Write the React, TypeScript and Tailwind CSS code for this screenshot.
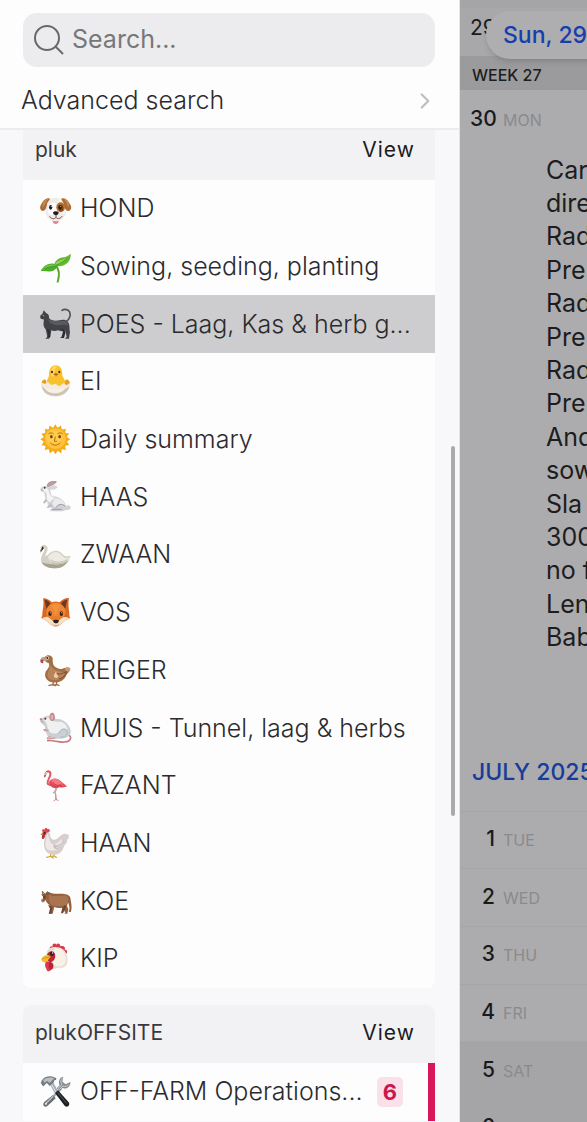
import type { ReactNode } from "react";
import { ChevronRight } from "lucide-react";

function Glyph({ children }: { children: ReactNode }) {
  return (
    <svg viewBox="0 0 96 96" className="w-8 h-8 shrink-0 overflow-visible" aria-hidden="true">
      {children}
    </svg>
  );
}

const Dog = () => (
  <Glyph>
    <path d="M37 78h19v7c0 5-4 8-9 8s-9-3-9-8z" fill="#ea7f93" />
    <path d="M48 14c19 0 29 12 31 30 2 20-9 40-31 41-22 0-34-18-31-40 2-19 12-31 31-31z" fill="#eeebe9" />
    <path d="M25 40c5-10 15-14 23-7 5 8 4 21-2 28-9 8-20 4-23-5z" fill="#fff" />
    <path d="M54 16c14-2 24 10 26 26 1 13-6 20-15 18-9-1-16-9-15-19 0-8 8-14 4-25z" fill="#f8f4f1" />
    <path d="M30 17C17 11 8 25 2 37c-4 8 0 18 8 17 11-3 9-19 13-26 3-6 7-8 7-11zM64 17c13-6 22 8 28 20 4 8 0 18-8 17-11-3-10-18-14-25-3-6-6-8-6-12z" fill="#aa6c36" />
    <path d="M8 31c5-9 10-14 17-13-8 5-12 21-17 28M87 31c-5-9-9-13-16-13 8 6 11 20 15 27" fill="#c98c50" />
    <ellipse cx="62" cy="43" rx="13" ry="15" fill="#b66d27" />
    <ellipse cx="63" cy="45" rx="7" ry="10" fill="#7d431a" />
    <ellipse cx="32" cy="43" rx="5" ry="7" fill="#262025" />
    <ellipse cx="60" cy="43" rx="5" ry="7" fill="#261b19" />
    <circle cx="34" cy="40" r="1.5" fill="#fff" />
    <circle cx="62" cy="40" r="1.5" fill="#fff" />
    <path d="M39 58c4-4 13-4 17 0 0 5-4 9-8 9s-9-4-9-9z" fill="#28181c" />
    <path d="M48 65v8c-6 8-17 3-19-3m19 3c6 8 16 2 18-4" fill="none" stroke="#765048" strokeWidth="3" />
  </Glyph>
);

const Sprout = () => (
  <Glyph>
    <path d="M53 92C59 72 59 56 48 45" fill="none" stroke="#5da72d" strokeWidth="6" strokeLinecap="round" />
    <path d="M42 44c3-18 18-24 29-25 7-1 15-5 21-11 2 23-15 44-50 36z" fill="#63b82f" />
    <path d="M54 44C38 31 11 39 2 61c17-4 36 11 52-17z" fill="#4dac28" />
    <path d="M45 43c17-4 30-16 43-29-13 11-24 12-34 17-5 3-8 7-9 12z" fill="#90d44c" />
    <path d="M5 58c15-7 30-13 45-14-16-8-35-3-45 14z" fill="#79c443" />
    <path d="M47 43c15-5 26-13 36-22M12 54c12-6 23-8 37-9" fill="none" stroke="#348f25" strokeWidth="2" />
  </Glyph>
);

const Cat = () => (
  <Glyph>
    <path d="M79 41c9-6 14-19 10-29C84 2 71 3 66 7" fill="none" stroke="#515258" strokeWidth="5" strokeLinecap="round" />
    <path d="M11 7l8 9c7 2 9 8 8 14 5 8 18 9 31 7 9-2 19-3 25 4 8 8 4 20 7 31l-3 20h-12l5-6-4-18c-8 4-15 1-22-1-8 3-15 2-20 0l-3 19-4 6H16l6-6-5-22C6 52 13 42 11 34 1 35-1 27 2 22l5-4z" fill="#424349" />
    <path d="M64 60l5 11-4 15-5 4h12l5-19M23 61l6 9 1 17h-9l5-5-4-15" fill="#2a2b30" />
    <path d="M25 34c14 9 34 4 50 5 8 1 10 10 8 14-14-8-31 3-45-4-8-4-13-9-13-15z" fill="#595a60" />
    <path d="M5 25l5-2M2 30l8-2" stroke="#292a2e" strokeWidth="2" />
    <circle cx="10" cy="23" r="2" fill="#d7b752" />
  </Glyph>
);

const HatchingChick = () => (
  <Glyph>
    <path d="M18 43c-4-7-12 0-14 8-3 9 7 11 17 8M76 43c5-7 13 1 14 9 2 8-8 10-16 7" fill="#e99c1d" />
    <path d="M27 28C26 8 35-2 47-2s21 10 20 30c0 7 10 11 8 24-3 13-13 20-28 20-17 0-28-9-27-23 0-9 7-14 7-21z" fill="#f8c22f" />
    <path d="M33 24C32 5 42-2 51 2c-9 5-9 18-5 28-8 4-13 0-13-6z" fill="#ffe16b" opacity=".8" />
    <path d="M3 49l12 5 8-7 11 10 12-4 12 8 13-10 9 7 10-8c2 23-17 42-43 42S1 75 3 49z" fill="#f3ecdc" />
    <path d="M5 60c5 22 20 30 41 30 23 0 38-12 43-31-16 17-62 25-84 1z" fill="#cfc4b4" />
    <path d="M12 61c10 10 27 10 37 8 9 4 20-3 31-11-5 18-20 24-34 24-18 0-30-7-34-21z" fill="#f6f0e7" />
    <ellipse cx="36" cy="18" rx="3" ry="4" fill="#37281b" />
    <ellipse cx="58" cy="18" rx="3" ry="4" fill="#37281b" />
    <path d="M40 25l7-5 8 5-7 7z" fill="#e67b20" />
    <path d="M41 25h13" stroke="#a84b17" strokeWidth="2" />
  </Glyph>
);

const RAYS = [0, 22, 45, 67, 90, 112, 135, 157, 180, 202, 225, 247, 270, 292, 315, 337];

const Sun = () => (
  <Glyph>
    {RAYS.map((angle) => (
      <path key={angle} d="M38 14l8-13 8 13z" fill="#efa719" transform={`rotate(${angle} 46 46)`} />
    ))}
    <circle cx="46" cy="46" r="36" fill="#f5ac1e" />
    <circle cx="46" cy="44" r="31" fill="#ffc33b" />
    <ellipse cx="42" cy="39" rx="24" ry="19" fill="#ffd052" opacity=".7" />
    <ellipse cx="34" cy="38" rx="4" ry="5" fill="#6e421d" />
    <ellipse cx="59" cy="38" rx="4" ry="5" fill="#6e421d" />
    <path d="M26 29c6-4 10-3 14 0M53 29c5-4 10-3 14 0M46 39l-3 13h7M32 57c8 9 20 9 28 0" fill="none" stroke="#b87119" strokeWidth="3" strokeLinecap="round" />
  </Glyph>
);

const Rabbit = () => (
  <Glyph>
    <path d="M20 15C21 3 36-3 50 1c1 5-12 13-26 18z" fill="#a19b9e" />
    <path d="M23 14c3-8 14-12 24-11-3 5-13 8-22 12z" fill="#d7959d" />
    <path d="M25 20c7-9 21-10 27-3 1 7-11 10-24 9z" fill="#d8d6da" />
    <path d="M4 20c6-8 20-6 25 5 5 10 2 18 10 21 22 1 36 15 39 29 7-4 14-2 14 5 0 6-8 8-15 7-6 5-17 4-45 4l-3-5 10-4c-11-2-17-7-18-22-7-8-7-16-8-26-9 1-14-5-9-14z" fill="#d2d1d7" />
    <path d="M10 19c11-3 17 8 18 17 3 10 10 14 19 15-12 4-20 12-18 23-10-4-7-25-10-38-4-4-12-7-9-17z" fill="#f4f3f5" />
    <path d="M47 52c17 0 27 11 28 22-12-12-24-1-30 5-11-6-9-19 2-27z" fill="#eceaee" />
    <path d="M17 53l-8 11 3 4 11-8 4 12-7 7 4 3 14-8" fill="#c0bfc5" />
    <path d="M48 80c6-10 18-14 27-4M36 85h29" fill="none" stroke="#9a98a0" strokeWidth="3" />
    <circle cx="14" cy="20" r="3" fill="#37343a" />
    <path d="M2 25l5 3" stroke="#d28e91" strokeWidth="3" />
  </Glyph>
);

const Swan = () => (
  <Glyph>
    <path d="M6 26c6-8 14-2 12 7C16 43 4 54 8 66" fill="none" stroke="#d3d0c3" strokeWidth="9" strokeLinecap="round" />
    <path d="M4 62c2-8 12-11 20-15 11-11 30-18 43-2 7 8 14 8 26 5-8 15-18 37-46 38C24 88 4 80 4 62z" fill="#d3d0c3" />
    <path d="M24 54c9-15 28-21 40-7 8 10 14 12 25 8-7 10-18 17-35 17-16 0-28-6-30-18z" fill="#eceae1" />
    <path d="M4 68c7 15 25 20 43 20 20 0 31-10 39-24-15 14-34 14-47 12-14-2-26-2-35-8z" fill="#a7a38e" />
    <path d="M31 62c11 9 32 11 49 0M36 70c15 6 27 5 39 0" fill="none" stroke="#c4c0b1" strokeWidth="3" />
    <path d="M7 24l-6 10 1 7 7-10z" fill="#81583a" />
    <path d="M6 22l6 5-6 7z" fill="#292827" />
  </Glyph>
);

const Fox = () => (
  <Glyph>
    <path d="M9 4c9-1 20 5 27 12 7-3 15-3 22 0C65 8 77 2 87 3c-3 14-1 29 0 38 2 9-1 15 4 22-12 4-21 12-30 20-9 7-19 7-28 0C24 75 15 67 3 63c6-6 3-14 5-22C10 30 12 16 9 4z" fill="#d96820" />
    <path d="M13 8c8 0 16 6 19 13-4 4-9 8-12 15-3-8-4-18-7-28zM82 8c-8 0-16 5-19 13 4 4 9 8 12 15 3-8 4-18 7-28z" fill="#6e3924" />
    <path d="M20 38C25 24 34 17 47 17s23 7 29 21c3 13-7 26-17 32H34C24 61 16 52 20 38z" fill="#ee8735" />
    <path d="M34 26c6-6 20-6 27 0-8 8-11 18-14 30-3-12-6-22-13-30z" fill="#f29340" />
    <path d="M5 63c10-2 16-5 22-3 8 2 14 12 20 13 6-1 13-12 21-13 7-1 13 1 22 3-13 4-20 15-29 20-9 6-19 6-27 0-10-6-16-15-29-20z" fill="#f2dfc4" />
    <path d="M22 60c8 2 18 16 25 16s17-14 25-16c-4-8-15-2-25-2s-20-6-25 2z" fill="#e87d2c" />
    <ellipse cx="30" cy="50" rx="5" ry="7" fill="#402116" />
    <ellipse cx="64" cy="50" rx="5" ry="7" fill="#402116" />
    <circle cx="31" cy="47" r="1.5" fill="#fff" />
    <circle cx="65" cy="47" r="1.5" fill="#fff" />
    <path d="M39 71c4-4 14-4 18 0-1 5-5 8-9 8s-8-3-9-8z" fill="#281d21" />
    <path d="M40 83c5 4 12 4 17 0" fill="none" stroke="#a78472" strokeWidth="2" />
  </Glyph>
);

const Dodo = () => (
  <Glyph>
    <path d="M40 76l-1 13-12 2m12-2l7 3M51 75l-2 14-9 1m9-1l8 2" fill="none" stroke="#9b6742" strokeWidth="4" strokeLinecap="round" />
    <path d="M38 10C35-1 21-2 14 6c-4 8 3 16 12 18 5 9-2 17-9 26-6 17 4 29 21 32 19 3 37-7 41-22l8-10 4-7-11-5c-13 0-16 8-27 2-13-6-15-10-15-30z" fill="#a26e46" />
    <path d="M28 31c8 2 13 18 29 16 9 5 14 4 18 3-3 15-14 25-31 26-16 0-23-8-21-19 1-9 8-12 5-26z" fill="#b8845a" />
    <path d="M44 53c13 8 22 3 35-3-3 14-12 20-22 21" fill="none" stroke="#795035" strokeWidth="3" />
    <path d="M75 45c-1-8 6-12 14-7 6 6-1 10-5 12" fill="#c69c77" />
    <path d="M16 7C8 3-1 11 2 18c1 4 4 8 8 6-2-7 5-7 11-6z" fill="#bd9d82" />
    <path d="M2 14c-3 6 2 12 8 10-3-3-2-7 2-10z" fill="#b6434a" />
    <circle cx="22" cy="9" r="5" fill="#f1e4c8" />
    <circle cx="22" cy="9" r="3" fill="#29221d" />
    <path d="M42 61c2-6 4-9 6-13l3 12c6 2 4 8-2 9-5 0-9-2-7-8z" fill="#f0cdad" />
  </Glyph>
);

const Mouse = () => (
  <Glyph>
    <path d="M77 67c21 1 20 21-4 23-19 2-34-7-50-4" fill="none" stroke="#c57981" strokeWidth="5" strokeLinecap="round" />
    <path d="M2 22c8-6 17-12 27-10 15 0 15 12 28 9 16 2 31 17 35 34 3 14-9 24-26 25H25l2-5c-10-6-10-20-12-29-2-8-12-9-14-18z" fill="#cbd0d2" />
    <path d="M11 23c6-8 16-7 25 1 8 8 16 3 29 6 12 4 18 17 18 24-8-10-21-5-27 7-8 6-21 4-27-2-9-11-4-23-18-36z" fill="#eff1f1" />
    <path d="M29 13c-1-11 12-15 14-5 4 9 1 20-8 19-7-2-7-9-6-14z" fill="#c6858b" />
    <path d="M32 13c1-6 7-7 8 0s-1 11-5 10-4-5-3-10z" fill="#e5adb0" />
    <path d="M57 64c5-13 18-17 25-4 1 12-8 15-21 15" fill="none" stroke="#aebbc0" strokeWidth="3" />
    <circle cx="16" cy="20" r="3" fill="#592e35" />
    <ellipse cx="3" cy="22" rx="4" ry="3" fill="#cb7a85" />
    <path d="M20 52l-9 1 3 4 12-2M32 73l-10 4 1 4 23-3M2 26l8 5" fill="none" stroke="#cb8e90" strokeWidth="3" />
  </Glyph>
);

const Flamingo = () => (
  <Glyph>
    <path d="M49 50l-5 15-5 3 8 2-1 20-5 3M46 67l4 23 6 1M53 50l-8 18" fill="none" stroke="#c896a0" strokeWidth="3" strokeLinejoin="round" />
    <path d="M17 10c5-10 16-6 14 4-1 9-10 17-8 26 3 9 18 2 28 3" fill="none" stroke="#df5664" strokeWidth="6" strokeLinecap="round" />
    <path d="M27 36c6-13 23-14 34-4 6 6 13 9 20 18-10-1-10 5-22 2-16 6-31 0-32-16z" fill="#e6505e" />
    <path d="M34 30c12-8 22-3 28 5l8 9-10-3-8 5c-8-5-15-7-18-16z" fill="#f57980" />
    <path d="M39 38c8 8 17 10 27 10M31 42c8 8 17 10 25 8" fill="none" stroke="#bd3847" strokeWidth="2" />
    <path d="M18 7c-6 1-4 8-5 14l5-6 4-3z" fill="#eba6a8" />
    <path d="M14 14l-1 9 5-6" fill="#37282b" />
    <circle cx="20" cy="8" r="2" fill="#fff3d2" />
  </Glyph>
);

const Rooster = () => (
  <Glyph>
    <path d="M32 74v11l-12 3m12-3l8 5M43 74l-1 10-7 2m7-2l7 4" fill="none" stroke="#d9a83f" strokeWidth="4" strokeLinecap="round" />
    <path d="M10 12c6-6 18-4 20 7 1 12 7 20 17 15 10-2 13-13 23-16 7-3 13 1 18 3-5 4 3 9-7 14 3 10-6 14-9 19-3 16-16 27-31 26-18 0-29-14-29-29 0-16 5-24-2-39z" fill="#d6cfce" />
    <path d="M21 16c9 15 5 31 21 33 11-2 14-8 24-16-1 21-9 34-29 35-18 0-24-12-20-26 2-9 4-15 4-26z" fill="#eee9e6" />
    <path d="M41 47c8 9 20 0 32-10-2 16-12 24-23 27-8-2-12-8-9-17z" fill="#c6bfc4" />
    <path d="M47 50c8 3 16-4 23-9M49 58c9 0 16-5 21-11" fill="none" stroke="#e9e4e4" strokeWidth="3" />
    <path d="M8 11C3 7 9 1 14 5c0-7 8-6 8-1 7-3 9 4 6 8l-9 2c1 4-1 7-6 7-6-1-5-6-5-10z" fill="#d94451" />
    <path d="M9 16c-2 7-6 11-2 17 6 1 9-7 8-15z" fill="#b92d3a" />
    <path d="M9 13l-8 7 8 2z" fill="#b9833b" />
    <circle cx="14" cy="15" r="3" fill="#342325" />
  </Glyph>
);

const Ox = () => (
  <Glyph>
    <path d="M14 26L4 27l3 6 9 4 3 14 9 9 5 15-4 11h9l5-20c8 4 17 4 25 2l8 15-3 3h9l3-13-4-10 3-11c6 14 5 22 2 29h6c6-13 1-28-1-43-4-11-15-11-28-12-15 0-26 1-36-5l-5 1z" fill="#94603e" />
    <path d="M27 29c18 8 39 0 53 3 8 7 5 22-2 28-13 5-32 4-43 0-8-7-10-19-8-31z" fill="#a97550" />
    <path d="M24 59l6 12-4 15h8l3-19M75 60l-8 8-4 17h6l9-19" fill="#714530" />
    <path d="M14 27C10 22 9 18 7 20c0 7 3 10 8 12m10-5c-2-4 0-9-4-6-2 3-1 6 0 8" fill="none" stroke="#6b5341" strokeWidth="3" strokeLinecap="round" />
    <path d="M4 42c-2 7 2 12 8 10l9-10-7-4z" fill="#bd8d6b" />
    <path d="M17 31l-8 3 1 14 9-5z" fill="#85512f" />
    <circle cx="12" cy="36" r="2" fill="#2e211c" />
    <path d="M5 47l6 1" stroke="#613c30" strokeWidth="2" />
  </Glyph>
);

const ChickenHead = () => (
  <Glyph>
    <path d="M30 20c-3-9 3-13 8-9C35 1 46-1 49 5c4-7 13-1 12 5 9-4 17 3 13 10 9-1 9 9 4 13" fill="#d63b4d" />
    <path d="M26 17c10-6 30-8 43 2 10 8 15 22 13 37-2 14-10 20-26 18-18 8-36 2-36-16 0-16-4-29 6-41z" fill="#e8ddd2" />
    <path d="M43 16c18-3 31 8 34 25 3 18-4 28-17 29-13 3-23-5-22-20z" fill="#f8f1e7" />
    <path d="M21 35c4-12 18-14 23-4 5 12-1 24-11 26-10 0-15-11-12-22z" fill="#b72834" />
    <path d="M5 47c7-12 19-15 27-5L18 58C9 58 2 53 5 47z" fill="#f4bd28" />
    <path d="M5 48c9-4 17-5 26-5" fill="none" stroke="#c48416" strokeWidth="2" />
    <path d="M18 56c11-2 17 6 17 17 0 14-15 16-16 4-5-7-5-15-1-21z" fill="#dc3b4e" />
    <path d="M27 56c10 0 14 7 13 16-2 12-13 9-14 1z" fill="#b62638" />
    <circle cx="36" cy="32" r="6" fill="#2b2023" />
    <circle cx="38" cy="30" r="2" fill="#fff" />
  </Glyph>
);

const Tools = () => (
  <Glyph>
    <path d="M63 38L37 65" stroke="#a8adb1" strokeWidth="8" />
    <path d="M38 58l9 9-24 22c-9 8-18-2-10-11z" fill="#686d72" />
    <path d="M38 62L16 84" stroke="#bcc1c3" strokeWidth="4" strokeLinecap="round" />
    <path d="M70 2c-14 3-15 17-11 26l-9 9 8 8 9-9c12 5 25-3 24-18l-14 7-10-8z" fill="#858b90" />
    <path d="M69 6c-8 5-8 14-3 20L54 37l4 3 11-10c8 3 15 0 18-5" fill="none" stroke="#cbd0d2" strokeWidth="3" />
    <path d="M29 24l9-8 17 31-9 8z" fill="#a8aeb2" />
    <path d="M34 24l15 26" stroke="#e0e3e4" strokeWidth="3" />
    <path d="M45 51l9-8 32 36c6 9-5 18-12 10z" fill="#1d2125" />
    <path d="M52 49l28 33" stroke="#555b60" strokeWidth="3" />
    <path d="M7 11C18-1 36-2 49 7l-1 6c-4-2-6 1-6 5l-13 12-8-8c-5 0-5 7-12 9L2 20c4-2 1-7 5-9z" fill="#757c82" />
    <path d="M10 12C21 3 34 3 43 7L29 21l-7-6-10 5z" fill="#b9c0c4" />
    <circle cx="18" cy="83" r="3" fill="#e8eaeb" />
  </Glyph>
);

type Item = { label: string; Icon: () => ReactNode; selected?: boolean; count?: number };

const PLUK: Item[] = [
  { label: "HOND", Icon: Dog },
  { label: "Sowing, seeding, planting", Icon: Sprout },
  { label: "POES - Laag, Kas & herb g...", Icon: Cat, selected: true },
  { label: "EI", Icon: HatchingChick },
  { label: "Daily summary", Icon: Sun },
  { label: "HAAS", Icon: Rabbit },
  { label: "ZWAAN", Icon: Swan },
  { label: "VOS", Icon: Fox },
  { label: "REIGER", Icon: Dodo },
  { label: "MUIS - Tunnel, laag & herbs", Icon: Mouse },
  { label: "FAZANT", Icon: Flamingo },
  { label: "HAAN", Icon: Rooster },
  { label: "KOE", Icon: Ox },
  { label: "KIP", Icon: ChickenHead },
];

const OFFSITE: Item[] = [{ label: "OFF-FARM Operations...", Icon: Tools, count: 6 }];

const NOTES = ["Car", "dire", "Rad", "Pre", "Rad", "Pre", "Rad", "Pre", "And", "sow", "Sla", "300", "no f", "Len", "Bab"];

const DAYS = [
  { day: 1, name: "TUE" },
  { day: 2, name: "WED" },
  { day: 3, name: "THU" },
  { day: 4, name: "FRI" },
  { day: 5, name: "SAT", weekend: true },
  { day: 6, name: "SUN", weekend: true },
];

function GroupHeader({ title }: { title: string }) {
  return (
    <div className="flex items-center justify-between h-[58px] pl-3 pr-5 pb-[2px] bg-[#f2f2f4]">
      <h2 className="text-[21px] text-[#3a3a3d]">{title}</h2>
      <button className="text-[21px] tracking-wider text-[#1c1c1f]">View</button>
    </div>
  );
}

function ItemRow({ item }: { item: Item }) {
  return (
    <button
      className={`relative flex items-center gap-2 min-h-[57px] pl-[17px] pr-8 text-left text-[25px] font-light text-[#2b2b2e] ${
        item.selected ? "bg-[#cdcdcf]" : ""
      }`}
    >
      <item.Icon />
      <span className="flex-1 whitespace-nowrap">{item.label}</span>
      {item.count && (
        <>
          <span className="px-[6px] rounded-[5px] bg-[#fae0e9] text-[22px] leading-[30px] font-bold text-[#cb174f]">
            {item.count}
          </span>
          <span className="absolute inset-y-0 right-0 w-[7px] bg-[#d9155b]" />
        </>
      )}
    </button>
  );
}

function Drawer() {
  return (
    <aside className="relative flex flex-col w-full max-w-[460px] shrink-0 bg-[#f8f8fa] border-r border-[#e4e4e6]">
      <div className="relative z-10 shrink-0 bg-[#fdfdfe] border-b-2 border-[#ececee] pt-[13px]">
        <label className="flex items-center gap-2 h-[54px] ml-[23px] mr-6 pl-[11px] rounded-[14px] bg-[#ececee]">
          <svg viewBox="0 0 30 30" className="w-[30px] h-[30px] shrink-0" fill="none" stroke="#69696c" strokeWidth="2" aria-hidden="true">
            <circle cx="13" cy="13" r="12" />
            <path d="M21.5 21.5L29 29" />
          </svg>
          <input
            aria-label="Search"
            placeholder="Search..."
            className="min-w-0 flex-1 bg-transparent text-[25px] outline-none placeholder:text-[#77777a]"
          />
        </label>
        <button className="flex items-center justify-between w-full h-[61px] pt-[6px] pl-[21px] pr-[21px] text-[25px] font-light text-[#2b2b2e]">
          Advanced search
          <ChevronRight size={26} strokeWidth={2} color="#bebec1" />
        </button>
      </div>

      <div className="flex-1 min-h-0 overflow-hidden pl-[23px] pr-6">
        <section className="-mt-2 rounded-lg overflow-hidden bg-[#fdfdfe]">
          <GroupHeader title="pluk" />
          <div className="grid auto-rows-fr min-h-[808px]">
            {PLUK.map((item) => (
              <ItemRow key={item.label} item={item} />
            ))}
          </div>
        </section>
        <section className="mt-[17px] rounded-t-lg overflow-hidden bg-[#fdfdfe]">
          <GroupHeader title="plukOFFSITE" />
          <div className="grid min-h-[58px]">
            {OFFSITE.map((item) => (
              <ItemRow key={item.label} item={item} />
            ))}
          </div>
        </section>
      </div>

      {/* scroll thumb */}
      <div className="absolute top-[446px] right-1 w-1 h-[370px] rounded-full bg-[#aaaaad]" />
    </aside>
  );
}

function DayLabel({ day, name }: { day: number; name: string }) {
  return (
    <div className="flex items-baseline gap-2">
      <span className="w-[25px] text-right text-[21px] font-medium text-[#1a1a1d]">{day}</span>
      <span className="text-[16px] text-[#8a8a8d]">{name}</span>
    </div>
  );
}

function Calendar() {
  return (
    <main className="relative flex-1 min-w-0 overflow-hidden whitespace-nowrap bg-[#acacae]">
      <div className="h-[56px] border-t-8 border-[#a5a5a7] bg-[#a8a8aa] pl-[10px] pt-1 text-[21px] text-[#1a1a1d]">29</div>
      <div className="h-[34px] flex items-center pl-3 pt-1 bg-[#9b9b9d] text-[16px] font-medium text-[#1d1d20]">WEEK 27</div>
      <div className="pl-[10px] pt-[13px]">
        <DayLabel day={30} name="MON" />
      </div>
      <ul className="mt-[19px] ml-[86px] grid auto-rows-fr items-center min-h-[501px] text-[25px] leading-[33px] text-[#1d1d20]">
        {NOTES.map((note, i) => (
          <li key={i}>{note}</li>
        ))}
      </ul>
      <h2 className="mt-[99px] mb-[21px] pl-3 text-[23px] leading-[36px] font-medium text-[#173c9a]">JULY 2025</h2>
      <div className="grid auto-rows-fr min-h-[346px]">
        {DAYS.map((d) => (
          <div
            key={d.day}
            className={`flex items-center pl-[10px] pb-[2px] border-t border-[#a6a6a8] ${d.weekend ? "bg-[#a5a5a7]" : ""}`}
          >
            <DayLabel day={d.day} name={d.name} />
          </div>
        ))}
      </div>
      <button className="absolute top-[11px] left-[26px] h-12 pl-[17px] pr-6 rounded-full bg-[#aeaeb0] shadow-md text-[23px] font-medium text-[#173fac]">
        Sun, 29
      </button>
    </main>
  );
}

export default function App() {
  return (
    <div className="flex h-screen overflow-hidden font-[Inter,'Liberation_Sans',sans-serif]">
      <Drawer />
      <Calendar />
    </div>
  );
}
